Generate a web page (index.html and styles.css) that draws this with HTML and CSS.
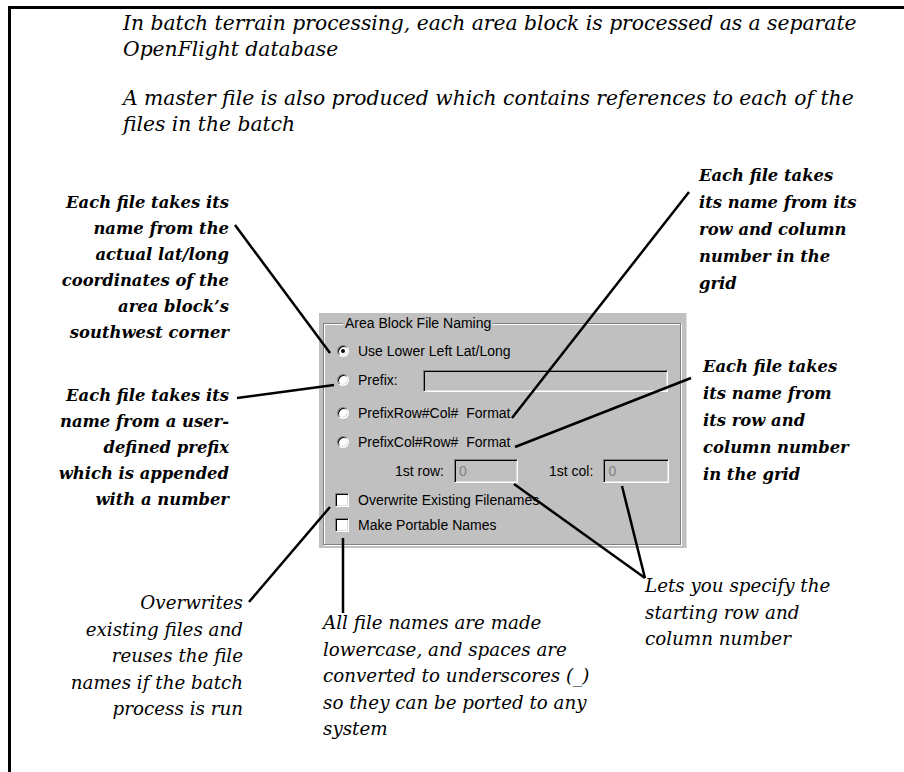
FILE: index.html
```html
<!DOCTYPE html>
<html lang="en">
<head>
  <meta charset="UTF-8">
  <title>Area Block File Naming</title>
  <link rel="stylesheet" href="styles.css">
</head>
<body>
  <div class="page">
    <div class="frame">
      <div class="intro">
        <p>In batch terrain processing, each area block is processed as a separate<br>OpenFlight database</p>
        <p>A master file is also produced which contains references to each of the<br>files in the batch</p>
      </div>

      <div class="figure">
        <div class="notes-left">
          <p class="note note-lat">Each file takes its<br>name from the<br>actual lat/long<br>coordinates of the<br>area block’s<br>southwest corner</p>
          <p class="note note-prefix">Each file takes its<br>name from a user-<br>defined prefix<br>which is appended<br>with a number</p>
        </div>

        <div class="dialog">
          <fieldset class="group">
            <legend>Area Block File Naming</legend>
            <div class="row row-1">
              <span class="radio checked"></span>
              <span class="label">Use Lower Left Lat/Long</span>
            </div>
            <div class="row row-2">
              <span class="radio"></span>
              <span class="label prefix-label">Prefix:</span>
              <span class="field field-prefix"></span>
            </div>
            <div class="row row-3">
              <span class="radio"></span>
              <span class="label">PrefixRow#Col#&nbsp; Format</span>
            </div>
            <div class="row row-4">
              <span class="radio"></span>
              <span class="label">PrefixCol#Row#&nbsp; Format</span>
            </div>
            <div class="row row-5">
              <span class="label start-label">1st row:</span>
              <span class="field field-start">0</span>
              <span class="label start-label col-label">1st col:</span>
              <span class="field field-start field-col">0</span>
            </div>
            <div class="row row-6">
              <span class="check"></span>
              <span class="label">Overwrite Existing Filenames</span>
            </div>
            <div class="row row-7">
              <span class="check"></span>
              <span class="label">Make Portable Names</span>
            </div>
          </fieldset>
        </div>

        <div class="notes-right">
          <p class="note note-rowcol">Each file takes<br>its name from its<br>row and column<br>number in the<br>grid</p>
          <p class="note note-colrow">Each file takes<br>its name from<br>its row and<br>column number<br>in the grid</p>
        </div>
      </div>

      <div class="notes-bottom">
        <p class="note plain note-overwrite">Overwrites<br>existing files and<br>reuses the file<br>names if the batch<br>process is run</p>
        <p class="note plain note-portable">All file names are made<br>lowercase, and spaces are<br>converted to underscores (_)<br>so they can be ported to any<br>system</p>
        <p class="note plain note-start">Lets you specify the<br>starting row and<br>column number</p>
      </div>
    </div>

    <svg class="leaders" width="904" height="772" viewBox="0 0 904 772">
      <line x1="235" y1="219" x2="330" y2="347"/>
      <line x1="237" y1="392" x2="334" y2="379"/>
      <line x1="689" y1="186" x2="512" y2="412"/>
      <line x1="691" y1="372" x2="515" y2="441"/>
      <line x1="514" y1="478" x2="645" y2="572"/>
      <line x1="622" y1="480" x2="645" y2="572"/>
      <line x1="330" y1="501" x2="249" y2="596"/>
      <line x1="343" y1="532" x2="343" y2="607"/>
    </svg>
  </div>
</body>
</html>
```

FILE: styles.css
```css
* {
  box-sizing: border-box;
}
body {
  margin: 0;
  background: #fff;
  color: #000;
  overflow: hidden;
}
p {
  margin: 0;
}
.page {
  position: relative;
  width: 904px;
  height: 772px;
}
.frame {
  margin: 6px 0 0 8px;
  height: 766px;
  border-top: 3px solid #000;
  border-left: 3px solid #000;
}

/* heading text */
.intro {
  padding: 1px 0 0 112px;
}
.intro p {
  font: italic 20.3px/26px "DejaVu Serif", serif;
  white-space: nowrap;
}
.intro p + p {
  margin-top: 23px;
}

/* callouts round the dialog */
.figure {
  display: flex;
  align-items: flex-start;
}
.note {
  font: italic bold 16.4px/26px "DejaVu Serif", serif;
  white-space: nowrap;
}
.note.plain {
  font-weight: normal;
  font-size: 18.3px;
  line-height: 26.5px;
}
.notes-left {
  width: 218px;
  text-align: right;
}
.note-lat {
  margin-top: 53px;
}
.note-prefix {
  margin-top: 37px;
}
.notes-right {
  margin-left: 12px;
}
.note-rowcol {
  margin-top: 25px;
  line-height: 27px;
}
.note-colrow {
  margin-top: 56px;
  margin-left: 4px;
  line-height: 27px;
}

.notes-bottom {
  display: grid;
  grid-template-columns: 232px 402px 1fr;
  align-items: start;
}
.note-overwrite {
  margin-top: 42px;
  text-align: right;
}
.note-portable {
  padding-left: 80px;
  margin-top: 62px;
}
.note-start {
  margin-top: 25px;
}

/* the dialog */
.dialog {
  width: 368px;
  height: 235px;
  margin: 176px 0 0 90px;
  padding: 2px 5px 3px 4px;
  background: #c0c0c0;
  border-right: 1px solid #dcdcdc;
  font: 14px/16px "Liberation Sans", Arial, sans-serif;
}
.group {
  margin: 0;
  height: 100%;
  padding: 9px 0 0 13px;
  border: 1px solid #808080;
  box-shadow: inset 1px 1px 0 #fff, 1px 1px 0 #fff;
  min-width: 0;
}
.group legend {
  margin-left: 6px;
  padding: 0 2px;
  font-size: 14px;
  line-height: 16px;
  background: #c0c0c0;
}
.row {
  display: flex;
  align-items: center;
  height: 22px;
}
.row-2 {
  margin-top: 6px;
  height: 24px;
}
.row-3 {
  margin-top: 10px;
}
.row-4 {
  margin-top: 7px;
}
.row-5 {
  margin-top: 6px;
  height: 24px;
}
.row-6 {
  margin-top: 6px;
}
.row-7 {
  margin-top: 3px;
}
.label {
  white-space: nowrap;
}
.radio {
  position: relative;
  width: 12px;
  height: 12px;
  margin-right: 9px;
  border-radius: 50%;
  background: #fff;
  border: 1px solid;
  border-color: #808080 #fff #fff #808080;
  box-shadow: inset 1px 1px 0 #000, inset -1px -1px 0 #dfdfdf;
}
.radio.checked::after {
  content: "";
  position: absolute;
  left: 3px;
  top: 3px;
  width: 4px;
  height: 4px;
  border-radius: 50%;
  background: #000;
}
.check {
  width: 14px;
  height: 14px;
  margin: 0 9px 0 -2px;
  background: #fff;
  border: 1px solid;
  border-color: #808080 #fff #fff #808080;
  box-shadow: inset 1px 1px 0 #000, inset -1px -1px 0 #dfdfdf;
}
.prefix-label {
  width: 65px;
}
.field {
  height: 22px;
  padding: 3px 4px;
  background: #c0c0c0;
  color: #808080;
  border: 1px solid;
  border-color: #808080 #fff #fff #808080;
  box-shadow: inset 1px 1px 0 #000, inset -1px -1px 0 #dfdfdf;
}
.field-prefix {
  width: 245px;
  align-self: flex-end;
}
.field-start {
  width: 64px;
  height: 24px;
  margin-left: 10px;
}
.field-col {
  width: 66px;
}
.row-5 .start-label {
  margin-left: 58px;
}
.row-5 .col-label {
  margin-left: 31px;
}

/* leader lines drawn over the figure */
.leaders {
  position: absolute;
  left: 0;
  top: 0;
  pointer-events: none;
}
.leaders line {
  stroke: #000;
  stroke-width: 2.5;
}
```
